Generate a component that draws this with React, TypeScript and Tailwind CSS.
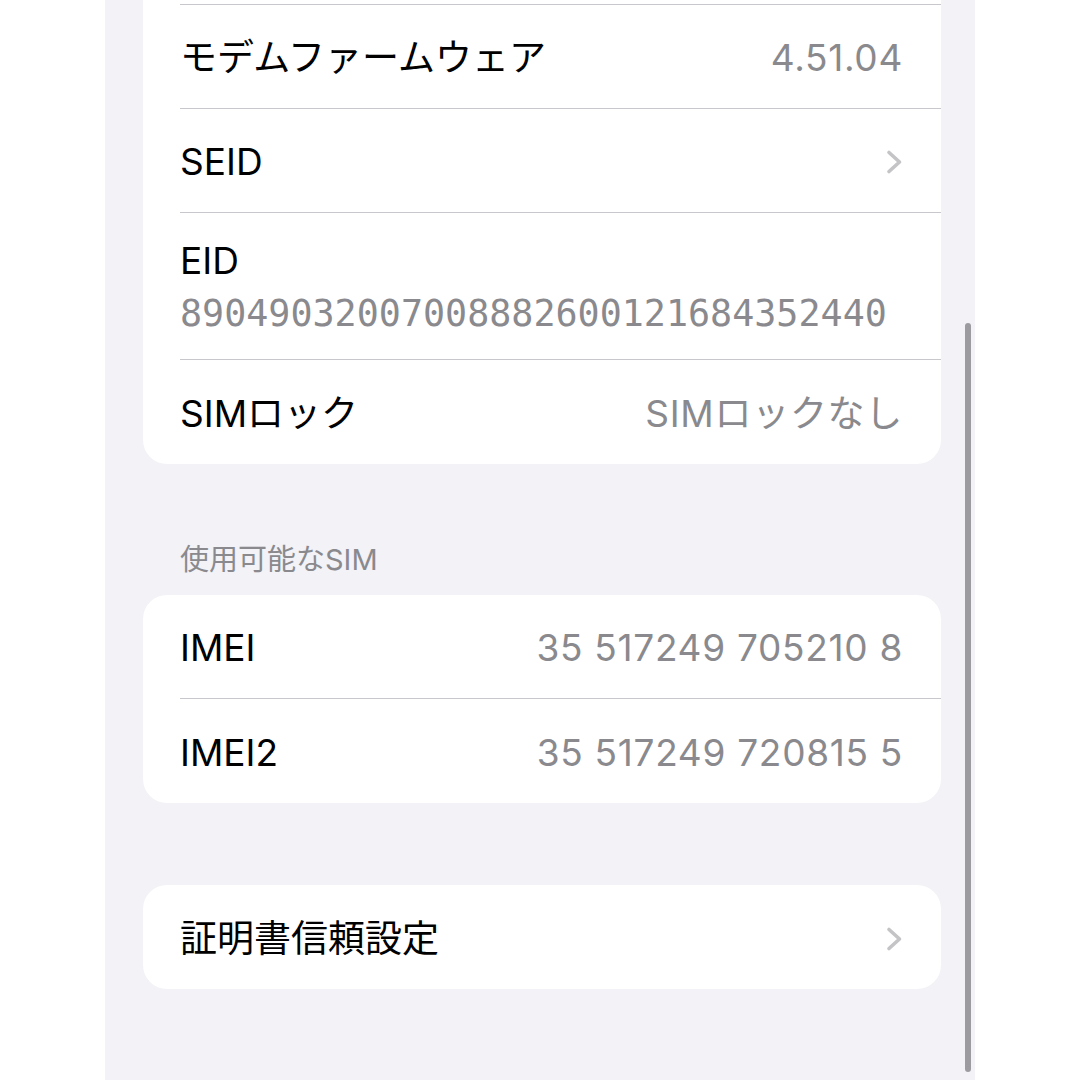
import React from 'react';

const font = { fontFamily: 'Inter, "Noto Sans CJK JP", sans-serif' };

function Chevron() {
  return (
    <svg width="17" height="26" viewBox="0 0 17 26" fill="none">
      <path d="M3 3.5 L13.5 13 L3 22.5" stroke="#c4c4c7" strokeWidth="3.6" strokeLinecap="round" strokeLinejoin="round" />
    </svg>
  );
}

function Row({ label, value, chevron, last }: { label: string; value?: string; chevron?: boolean; last?: boolean }) {
  return (
    <div className="pl-[37px]">
      <div
        className={
          'flex h-[104px] items-center justify-between pt-[3px] pr-[38px] ' + (last ? '' : 'border-b border-[#c8c8cc]')
        }
      >
        <span className="text-[37px] text-black">{label}</span>
        {value && <span className="text-[37px] tracking-[0.7px] text-[#8a8a8e]">{value}</span>}
        {chevron && <Chevron />}
      </div>
    </div>
  );
}

export default function App() {
  return (
    <div className="min-h-[1080px] bg-white" style={font}>
      <div className="relative ml-[105px] h-[1080px] w-[870px] overflow-hidden bg-[#f2f2f7] pl-[38px] pr-[34px]">
        <div className="rounded-b-[24px] bg-white">
          <div className="pl-[37px]">
            <div className="h-[5px] border-b border-[#c8c8cc]" />
          </div>
          <Row label="モデムファームウェア" value="4.51.04" />
          <Row label="SEID" chevron />
          <div className="pl-[37px]">
            <div className="flex h-[147px] flex-col justify-center border-b border-[#c8c8cc] pt-[2px]">
              <span className="text-[37px] leading-[53px] text-black">EID</span>
              <span className="font-['DejaVu_Sans_Mono',monospace] text-[36.7px] leading-[53px] text-[#8a8a8e]">
                89049032007008882600121684352440
              </span>
            </div>
          </div>
          <Row label="SIMロック" value="SIMロックなし" last />
        </div>

        <div className="mt-[78px] mb-[17px] pl-[37px] text-[29px] leading-[36px] text-[#8a8a8e]">使用可能なSIM</div>

        <div className="rounded-[24px] bg-white">
          <Row label="IMEI" value="35 517249 705210 8" />
          <Row label="IMEI2" value="35 517249 720815 5" last />
        </div>

        <div className="mt-[82px] rounded-[24px] bg-white">
          <Row label="証明書信頼設定" chevron last />
        </div>

        <div className="absolute top-[323px] right-[4px] h-[749px] w-[6px] rounded-full bg-[#9b9ba0]" />
      </div>
    </div>
  );
}
